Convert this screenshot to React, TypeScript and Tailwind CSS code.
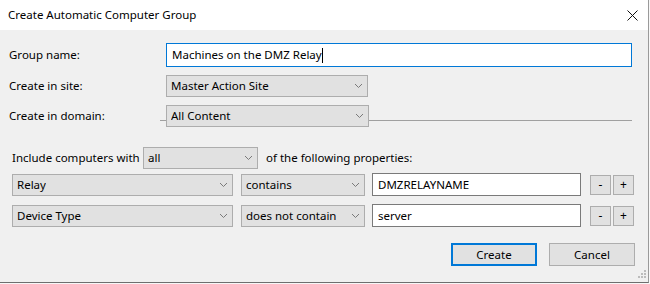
const font = "font-['Segoe_UI','Noto_Sans',sans-serif]";

const Chevron = () => (
    <svg width="9" height="6" viewBox="0 0 9 6" className="shrink-0">
        <path d="M1 1 L4.5 4.5 L8 1" fill="none" stroke="#7a7a7a" strokeWidth="1" />
    </svg>
);

const Select = ({ value, className }: { value: string; className: string }) => (
    <div className={`flex items-center justify-between shrink-0 bg-[#e1e1e1] border border-[#adadad] pl-[4px] pr-[4px] ${className}`}>
        <span className="truncate">{value}</span>
        <Chevron />
    </div>
);

const TextBox = ({ value, className }: { value: string; className: string }) => (
    <div className={`flex items-center shrink-0 bg-white border border-[#7a7a7a] px-[5px] ${className}`}>
        <span>{value}</span>
    </div>
);

const SmallButton = ({ label }: { label: string }) => (
    <div className="w-[21px] h-[20px] flex items-center justify-center bg-[#e1e1e1] border border-[#adadad] text-[12px] leading-none">
        {label}
    </div>
);

const RuleRow = ({ prop, op, value }: { prop: string; op: string; value: string }) => (
    <div className="flex items-center pl-[12px]">
        <Select value={prop} className="w-[221px] h-[22px]" />
        <Select value={op} className="w-[124px] h-[22px] ml-[8px]" />
        <TextBox value={value} className="w-[209px] h-[23px] ml-[7px]" />
        <div className="flex gap-[2px] ml-[9px]">
            <SmallButton label="-" />
            <SmallButton label="+" />
        </div>
    </div>
);

const App = () => {
    return (
        <div className={`w-[650px] h-[284px] bg-[#f7f7f7] overflow-hidden text-[11.5px] text-black ${font}`}>
            <div className="w-[649px] h-[283px] flex flex-col bg-[#f0f0f0] border-r border-b border-r-[#9a9a9a] border-b-[#6e6e6e]">
                {/* title bar */}
                <div className="h-[30px] bg-white flex items-center justify-between pl-[8px] pr-[10px] shrink-0">
                    <span>Create Automatic Computer Group</span>
                    <svg width="11" height="11" viewBox="0 0 11 11">
                        <path d="M0.5 0.5 L10.5 10.5 M10.5 0.5 L0.5 10.5" stroke="#111" strokeWidth="1" />
                    </svg>
                </div>

                <div className="flex flex-col pt-[13px]">
                    <div className="flex items-center h-[24px]">
                        <span className="w-[166px] pl-[9px]">Group name:</span>
                        <div className="w-[466px] h-[24px] bg-white border border-[#0078d7] flex items-center pl-[5px]">
                            <span>Machines on the DMZ Relay</span>
                            <span className="w-px h-[15px] bg-black" />
                        </div>
                    </div>

                    <div className="flex items-center h-[22px] mt-[8px]">
                        <span className="w-[166px] pl-[9px]">Create in site:</span>
                        <Select value="Master Action Site" className="w-[202px] h-[22px]" />
                    </div>

                    <div className="flex items-start h-[22px] mt-[8px]">
                        <span className="w-[160px] pl-[9px] leading-[22px]">Create in domain:</span>
                        <div className="w-[6px] mt-[15px] border-t border-[#a0a0a0]" />
                        <Select value="All Content" className="w-[203px] h-[22px]" />
                        <div className="w-[263px] mt-[15px] border-t border-[#a0a0a0]" />
                    </div>

                    <div className="flex items-center h-[22px] mt-[20px] pl-[12px]">
                        <span className="w-[131px] shrink-0 whitespace-nowrap">Include computers with</span>
                        <Select value="all" className="w-[115px] h-[22px]" />
                        <span className="ml-[8px] whitespace-nowrap">of the following properties:</span>
                    </div>

                    <div className="mt-[4px]">
                        <RuleRow prop="Relay" op="contains" value="DMZRELAYNAME" />
                    </div>
                    <div className="mt-[8px]">
                        <RuleRow prop="Device Type" op="does not contain" value="server" />
                    </div>

                    <div className="flex justify-end gap-[12px] mt-[16px] pr-[13px]">
                        <div className="w-[86px] h-[23px] flex items-center justify-center bg-[#e1e1e1] border-2 border-[#0078d7]">
                            Create
                        </div>
                        <div className="w-[86px] h-[23px] flex items-center justify-center bg-[#e1e1e1] border border-[#adadad]">
                            Cancel
                        </div>
                    </div>

                    <div className="flex justify-end pr-[2px] mt-[4px]">
                        <svg width="8" height="8" viewBox="0 0 8 8">
                            <rect x="6" y="0" width="2" height="2" fill="#bcbcbc" />
                            <rect x="3" y="3" width="2" height="2" fill="#bcbcbc" />
                            <rect x="6" y="3" width="2" height="2" fill="#bcbcbc" />
                            <rect x="0" y="6" width="2" height="2" fill="#bcbcbc" />
                            <rect x="3" y="6" width="2" height="2" fill="#bcbcbc" />
                            <rect x="6" y="6" width="2" height="2" fill="#bcbcbc" />
                        </svg>
                    </div>
                </div>
            </div>
        </div>
    );
};

export default App;
